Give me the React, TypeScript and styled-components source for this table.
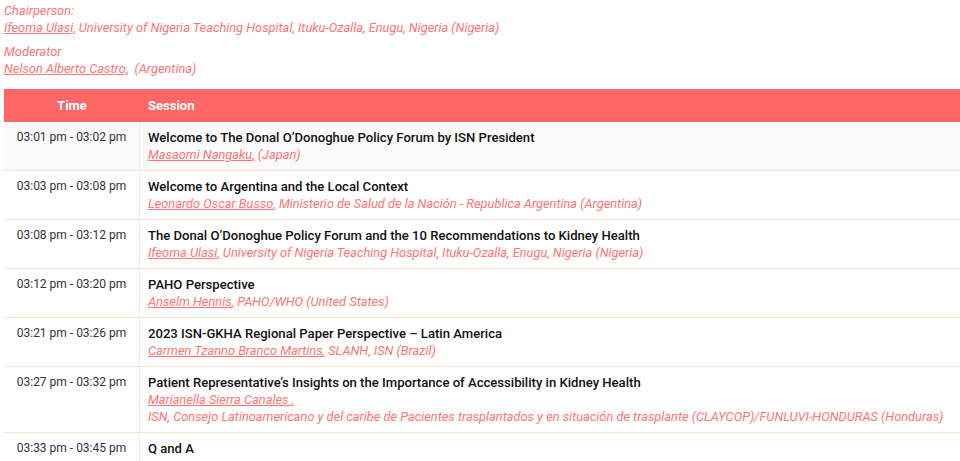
import React from 'react'
import styled, { createGlobalStyle } from 'styled-components'

const GlobalStyle = createGlobalStyle`
  body {
    margin: 0;
    background: #fff;
    font-family: Roboto, 'Noto Sans', sans-serif;
  }
`

interface Speaker {
  name: string
  rest: string
  breakLine?: boolean
}

interface Session {
  time: string
  title: string
  speaker?: Speaker
}

const sessions: Session[] = [
  {
    time: '03:01 pm - 03:02 pm',
    title: 'Welcome to The Donal O’Donoghue Policy Forum by ISN President',
    speaker: { name: 'Masaomi Nangaku', rest: ' (Japan)' },
  },
  {
    time: '03:03 pm - 03:08 pm',
    title: 'Welcome to Argentina and the Local Context',
    speaker: {
      name: 'Leonardo Oscar Busso',
      rest: 'Ministerio de Salud de la Nación - Republica Argentina (Argentina)',
    },
  },
  {
    time: '03:08 pm - 03:12 pm',
    title: 'The Donal O’Donoghue Policy Forum and the 10 Recommendations to Kidney Health',
    speaker: {
      name: 'Ifeoma Ulasi',
      rest: 'University of Nigeria Teaching Hospital, Ituku-Ozalla, Enugu, Nigeria (Nigeria)',
    },
  },
  {
    time: '03:12 pm - 03:20 pm',
    title: 'PAHO Perspective',
    speaker: { name: 'Anselm Hennis', rest: 'PAHO/WHO (United States)' },
  },
  {
    time: '03:21 pm - 03:26 pm',
    title: '2023 ISN-GKHA Regional Paper Perspective – Latin America',
    speaker: { name: 'Carmen Tzanno Branco Martins', rest: 'SLANH, ISN (Brazil)' },
  },
  {
    time: '03:27 pm - 03:32 pm',
    title: 'Patient Representative’s Insights on the Importance of Accessibility in Kidney Health',
    speaker: {
      name: 'Marianella Sierra Canales ',
      rest: 'ISN, Consejo Latinoamericano y del caribe de Pacientes trasplantados y en situación de trasplante (CLAYCOP)/FUNLUVI-HONDURAS (Honduras)',
      breakLine: true,
    },
  },
  { time: '03:33 pm - 03:45 pm', title: 'Q and A' },
]

const Page = styled.div`
  padding: 2px 0 0 4px;
`

const RoleBlock = styled.div`
  font-size: 12.8px;
  line-height: 17px;
  font-style: italic;
  color: #ff7474;
  margin-bottom: 7px;
`

const RoleLabel = styled.div``

const Name = styled.span`
  text-decoration: underline;
`

const Table = styled.div`
  margin-top: 12px;
  display: grid;
  grid-template-columns: 136px 1fr;
`

const HeadCell = styled.div<{ $center?: boolean }>`
  background: #ff6666;
  color: #fff;
  font-weight: 700;
  font-size: 13px;
  height: 33px;
  display: flex;
  align-items: center;
  justify-content: ${({ $center }) => ($center ? 'center' : 'flex-start')};
  padding-left: ${({ $center }) => ($center ? '0' : '8px')};
`

const TimeCell = styled.div<{ $shade?: boolean }>`
  background: ${({ $shade }) => ($shade ? '#fafafa' : '#fff')};
  border-bottom: 1px solid #fbe3c6;
  border-right: 1px solid #eeeeee;
  padding: 7px 0;
  text-align: center;
  font-size: 12px;
  line-height: 17px;
  color: #333;
`

const SessionCell = styled.div<{ $shade?: boolean }>`
  background: ${({ $shade }) => ($shade ? '#fafafa' : '#fff')};
  border-bottom: 1px solid #fbe3c6;
  padding: 7px 8px;
`

const Title = styled.div`
  font-size: 13.1px;
  line-height: 17px;
  font-weight: 500;
  color: #111;
`

const SpeakerLine = styled.div`
  font-size: 12.8px;
  line-height: 17px;
  font-style: italic;
  color: #ff7474;
`

const App: React.FC = () => {
  return (
    <>
      <GlobalStyle />
      <Page>
        <RoleBlock>
          <RoleLabel>Chairperson:</RoleLabel>
          <div>
            <Name>Ifeoma Ulasi,</Name> University of Nigeria Teaching Hospital, Ituku-Ozalla, Enugu, Nigeria (Nigeria)
          </div>
        </RoleBlock>
        <RoleBlock>
          <RoleLabel>Moderator</RoleLabel>
          <div>
            <Name>Nelson Alberto Castro,</Name>&nbsp; (Argentina)
          </div>
        </RoleBlock>
        <Table>
          <HeadCell $center>Time</HeadCell>
          <HeadCell>Session</HeadCell>
          {sessions.map((s, i) => (
            <React.Fragment key={s.time}>
              <TimeCell $shade={i === 0}>{s.time}</TimeCell>
              <SessionCell $shade={i === 0}>
                <Title>{s.title}</Title>
                {s.speaker && (
                  <SpeakerLine>
                    <Name>{s.speaker.name},</Name>
                    {s.speaker.breakLine ? <br /> : ' '}
                    {s.speaker.rest}
                  </SpeakerLine>
                )}
              </SessionCell>
            </React.Fragment>
          ))}
        </Table>
      </Page>
    </>
  )
}

export default App
